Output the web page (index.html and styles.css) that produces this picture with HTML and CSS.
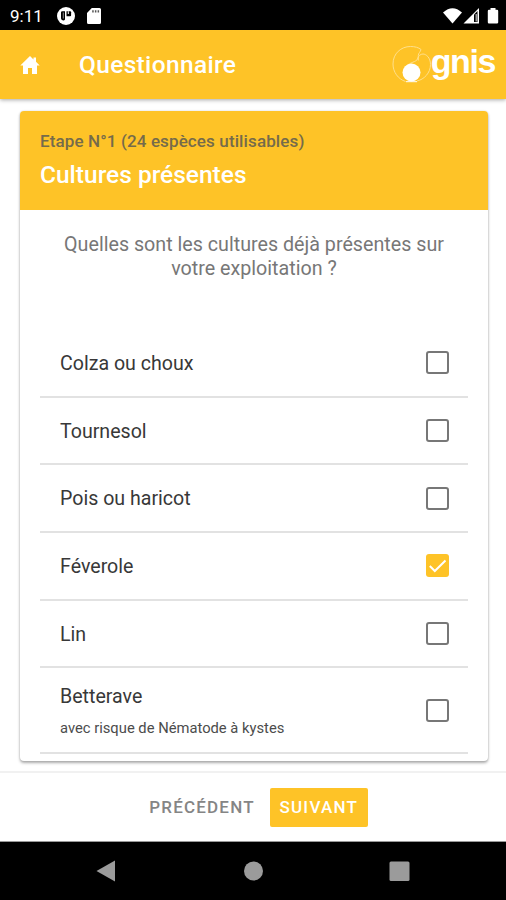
FILE: index.html
```html
<!DOCTYPE html>
<html lang="fr">
<head>
<meta charset="utf-8">
<title>Questionnaire</title>
<link rel="stylesheet" href="styles.css">
</head>
<body>
<div class="status">
  <span class="time">9:11</span>
  <svg class="app-icon" width="18" height="18" viewBox="0 0 18 18"><circle cx="9" cy="9" r="9" fill="#fff"/><path d="M8 4.300H5.200a1.200 1.200 0 0 0-1.200 1.200v5.700a2.200 2.200 0 0 0 4 1.300z" fill="#000"/><path d="M5.800 5.500h1v6h-1z" fill="#888"/><path d="M9.500 4.300h3.600a1 1 0 0 1 1 1v3a1 1 0 0 1-1 1H9.500z" fill="#000"/><path d="M10.800 4.300h1v2.700h-1z" fill="#fff"/></svg>
  <svg class="sd-icon" width="14" height="16" viewBox="0 0 14 16"><path d="M4.800 0H12.500A1.500 1.500 0 0 1 14 1.500v13a1.500 1.500 0 0 1-1.500 1.500h-11A1.500 1.500 0 0 1 0 14.500V5z" fill="#fff"/><path d="M5.200 2.200h1.500v2.300H5.200zM7.900 2.200h1.500v2.300H7.900zM10.600 2.200h1.500v2.300h-1.500z" fill="#555"/></svg>
  <svg class="signals" width="57" height="18" viewBox="0 0 57 18"><path d="M0 5.500Q9.500-3 19 5.500L9.500 16.500z" fill="#fff"/><path d="M36 1v15.500H20.500z" fill="#fff"/><path d="M31 7.500l3.500-3.500v11H31z" fill="#000"/><path d="M32.500 7h1.500v7.500h-1.500z" fill="#999"/><path d="M47.500 1h5v1.800H54a1.200 1.200 0 0 1 1.200 1.200v11.500A1.200 1.200 0 0 1 54 16.500h-8a1.200 1.200 0 0 1-1.200-1.200V4A1.200 1.200 0 0 1 46 2.800h1.500z" fill="#fff"/></svg>
</div>
<header class="appbar">
  <svg class="home" width="20" height="18" viewBox="0 0 20 18"><path d="M10 0l3.500 3.400V1.500H16v4.300L19.700 9.500H17V18h-5v-6H8v6H3V9.500H.3z" fill="#fff"/></svg>
  <h1 class="title">Questionnaire</h1>
  <div class="logo">
    <svg width="39" height="38" viewBox="0 0 39 38" fill="none"><g stroke="#ffe08c" stroke-width="1"><path d="M13.500 36.500C6 34 1 27 1 19 1 8.500 9 1.500 18.500 1.500c4.500 0 8 1 10.500 3-.5 2.500-2.700 3.500-2.700 6v5"/><path d="M25 36c7-1.500 13.500-8 13.500-16.500C38.500 12.500 34 9 31 9c-2.500 0-5 2-5.500 5-1 3-7.500 3-11.500 7.500"/></g><circle cx="19.500" cy="27.500" r="9" fill="#fff"/><path d="M14 36.700h11" stroke="#fff"/></svg>
    <span class="wordmark">gnis</span>
  </div>
</header>
<main class="content">
  <section class="card">
    <div class="card-head">
      <p class="step">Etape N°1 (24 espèces utilisables)</p>
      <h2 class="card-title">Cultures présentes</h2>
    </div>
    <div class="card-body">
      <p class="question">Quelles sont les cultures déjà présentes sur<br>votre exploitation ?</p>
      <ul class="list">
        <li class="row"><span class="label">Colza ou choux</span><span class="box"></span></li>
        <li class="row"><span class="label">Tournesol</span><span class="box"></span></li>
        <li class="row"><span class="label">Pois ou haricot</span><span class="box"></span></li>
        <li class="row"><span class="label">Féverole</span><span class="box checked"><svg width="23" height="23" viewBox="0 0 23 23"><path d="M3.800 12l5 5L19.500 6.500" fill="none" stroke="#fff" stroke-width="2"/></svg></span></li>
        <li class="row"><span class="label">Lin</span><span class="box"></span></li>
        <li class="row tall"><span class="stack"><span class="label">Betterave</span><span class="note">avec risque de Nématode à kystes</span></span><span class="box"></span></li>
      </ul>
    </div>
  </section>
</main>
<footer class="actions">
  <button class="btn">PRÉCÉDENT</button>
  <button class="btn primary">SUIVANT</button>
</footer>
<nav class="sysnav">
  <svg width="506" height="58" viewBox="0 0 506 58"><g fill="#9b9b9b"><path d="M96.500 29L115 18.500v21z"/><circle cx="253.500" cy="29" r="9.500"/><rect x="389.500" y="19.500" width="20" height="19.500" rx="1.500"/></g></svg>
</nav>
</body>
</html>
```
FILE: styles.css
```css
* { box-sizing: border-box; }
body, h1, h2, p, ul { margin: 0; padding: 0; }
body {
  width: 506px;
  height: 900px;
  overflow: hidden;
  display: flex;
  flex-direction: column;
  background: #fff;
  font-family: Roboto, "Liberation Sans", sans-serif;
}
.status {
  height: 30px;
  flex: none;
  background: #000;
  color: #fff;
  display: flex;
  align-items: center;
  padding: 1px 4px 0 10px;
}
.time { font-size: 17px; width: 47px; line-height: 20px; padding-top: 1px; }
.app-icon { margin-right: 12px; }
.sd-icon { margin-top: 1px; }
.signals { margin-left: auto; margin-right: 2px; }
.appbar {
  height: 69px;
  flex: none;
  background: #fec327;
  color: #fff;
  display: flex;
  align-items: center;
  padding: 0 11px 0 20px;
  box-shadow: 0 1px 4px rgba(0, 0, 0, .35);
  z-index: 1;
}
.home { margin-right: 39px; }
.title { font-size: 24.500px; font-weight: 500; line-height: 30px; letter-spacing: .34px; }
.logo { margin-left: auto; display: flex; align-items: center; }
.logo svg { margin-top: -1px; }
.wordmark {
  font-family: "Liberation Sans", sans-serif;
  font-weight: 700;
  font-size: 34px;
  line-height: 36px;
  letter-spacing: -1.400px;
  margin-top: -8px;
}
.content { flex: none; height: 672px; padding: 12px 18px 0 20px; }
.card {
  height: 650px;
  border-radius: 4px;
  overflow: hidden;
  background: #fff;
  box-shadow: 0 2px 3px rgba(0, 0, 0, .32), 0 0 2px rgba(0, 0, 0, .15);
}
.card-head { height: 99px; background: #fec327; padding: 20px 20px 0; }
.step { font-size: 17px; line-height: 20px; font-weight: 500; color: #756b4b; letter-spacing: .12px; }
.card-title { font-size: 24.500px; line-height: 30px; font-weight: 500; color: #fff; margin-top: 9px; }
.card-body { padding: 23px 20px 0; }
.question { text-align: center; font-size: 19.700px; line-height: 24px; color: #777; height: 97px; white-space: nowrap; }
.list { list-style: none; }
.row {
  height: 67.700px;
  border-bottom: 2px solid #e2e2e2;
  display: flex;
  align-items: center;
  justify-content: space-between;
  padding: 0 19px 0 20px;
}
.label { font-size: 19.600px; line-height: 24px; color: #383838; position: relative; top: 1px; }
.tall { height: 86px; }
.stack { display: flex; flex-direction: column; gap: 9px; }
.note { font-size: 14.750px; line-height: 20px; color: #4c4c4c; position: relative; top: 1px; }
.box { width: 23px; height: 23px; border: 2px solid #777; border-radius: 3px; flex: none; }
.checked { border: 0; background: #fec327; }
.checked svg { display: block; }
.actions {
  height: 71px;
  flex: none;
  border-top: 2px solid #f1f1f1;
  border-bottom: 1px solid #999;
  display: flex;
  justify-content: center;
  align-items: center;
  padding-left: 2px;
  gap: 6px;
}
.btn {
  border: 0;
  padding: 0 9px;
  height: 39px;
  background: none;
  font: 500 17px/20px Roboto, sans-serif;
  letter-spacing: 1.200px;
  color: #858585;
  white-space: nowrap;
}
.primary { width: 98px; background: #fec327; color: #fff; border-radius: 2px; }
.sysnav { height: 58px; flex: none; background: #000; }
.sysnav svg { display: block; }
```
